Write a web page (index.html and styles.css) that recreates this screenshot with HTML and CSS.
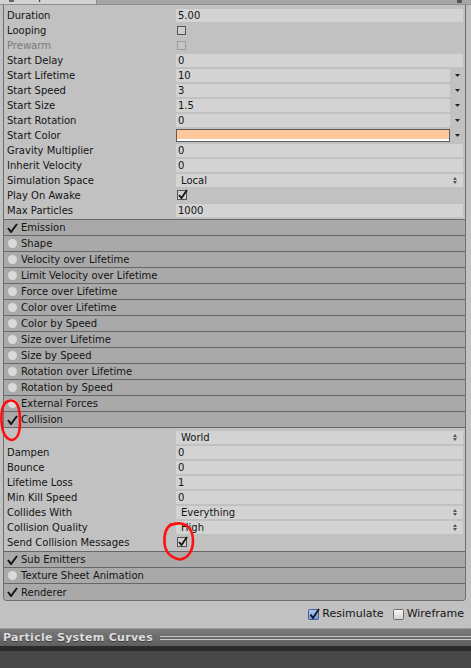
FILE: index.html
```html
<!DOCTYPE html>
<html>
<head>
<meta charset="utf-8">
<link rel="stylesheet" href="styles.css">
</head>
<body>
<div class="tabbar">
  <div class="tab"><span class="tab-icon"></span><span class="tab-label">Inspector</span></div>
  <div class="tab-rest"><span class="menu-icon"></span></div>
</div>

<div class="panel">
  <div class="props">
    <div class="row"><span class="label">Duration</span><div class="field">5.00</div></div>
    <div class="row"><span class="label">Looping</span><div class="cell"><span class="check"></span></div></div>
    <div class="row disabled"><span class="label">Prewarm</span><div class="cell"><span class="check off"></span></div></div>
    <div class="row"><span class="label">Start Delay</span><div class="field">0</div></div>
    <div class="row"><span class="label">Start Lifetime</span><div class="drop"><div class="field">10</div><svg class="arrow" width="5" height="3" viewBox="0 0 5 3"><path d="M0 0H5L2.5 3Z" fill="#222"/></svg></div></div>
    <div class="row"><span class="label">Start Speed</span><div class="drop"><div class="field">3</div><svg class="arrow" width="5" height="3" viewBox="0 0 5 3"><path d="M0 0H5L2.5 3Z" fill="#222"/></svg></div></div>
    <div class="row"><span class="label">Start Size</span><div class="drop"><div class="field">1.5</div><svg class="arrow" width="5" height="3" viewBox="0 0 5 3"><path d="M0 0H5L2.5 3Z" fill="#222"/></svg></div></div>
    <div class="row"><span class="label">Start Rotation</span><div class="drop"><div class="field">0</div><svg class="arrow" width="5" height="3" viewBox="0 0 5 3"><path d="M0 0H5L2.5 3Z" fill="#222"/></svg></div></div>
    <div class="row"><span class="label">Start Color</span><div class="drop"><div class="color"><span class="swatch"></span><span class="alpha"></span></div><svg class="arrow" width="5" height="3" viewBox="0 0 5 3"><path d="M0 0H5L2.5 3Z" fill="#222"/></svg></div></div>
    <div class="row"><span class="label">Gravity Multiplier</span><div class="field">0</div></div>
    <div class="row"><span class="label">Inherit Velocity</span><div class="field">0</div></div>
    <div class="row"><span class="label">Simulation Space</span><div class="field popup"><span>Local</span><svg class="updown" width="4" height="7" viewBox="0 0 4 7"><path d="M0 3H4L2 0Z M0 4H4L2 7Z" fill="#555"/></svg></div></div>
    <div class="row"><span class="label">Play On Awake</span><div class="cell"><svg class="checked" width="12" height="11" viewBox="0 0 12 11"><rect x="0.5" y="1.5" width="9" height="9" fill="#d0d0d0" stroke="#555"/><path d="M2 6L4.5 9L10 1" fill="none" stroke="#111" stroke-width="1.8"/></svg></div></div>
    <div class="row"><span class="label">Max Particles</span><div class="field">1000</div></div>
  </div>

  <div class="mod"><svg class="icon" width="11" height="10" viewBox="0 0 11 10"><path d="M1 5L4 9L10 1" fill="none" stroke="#151515" stroke-width="2"/></svg><span>Emission</span></div>
  <div class="mod"><span class="dot"></span><span>Shape</span></div>
  <div class="mod"><span class="dot"></span><span>Velocity over Lifetime</span></div>
  <div class="mod"><span class="dot"></span><span>Limit Velocity over Lifetime</span></div>
  <div class="mod"><span class="dot"></span><span>Force over Lifetime</span></div>
  <div class="mod"><span class="dot"></span><span>Color over Lifetime</span></div>
  <div class="mod"><span class="dot"></span><span>Color by Speed</span></div>
  <div class="mod"><span class="dot"></span><span>Size over Lifetime</span></div>
  <div class="mod"><span class="dot"></span><span>Size by Speed</span></div>
  <div class="mod"><span class="dot"></span><span>Rotation over Lifetime</span></div>
  <div class="mod"><span class="dot"></span><span>Rotation by Speed</span></div>
  <div class="mod"><span class="dot"></span><span>External Forces</span></div>
  <div class="mod"><svg class="icon" width="11" height="10" viewBox="0 0 11 10"><path d="M1 5L4 9L10 1" fill="none" stroke="#151515" stroke-width="2"/></svg><span>Collision</span></div>

  <div class="mod-body">
    <div class="row"><span class="label"></span><div class="field popup"><span>World</span><svg class="updown" width="4" height="7" viewBox="0 0 4 7"><path d="M0 3H4L2 0Z M0 4H4L2 7Z" fill="#555"/></svg></div></div>
    <div class="row"><span class="label">Dampen</span><div class="field">0</div></div>
    <div class="row"><span class="label">Bounce</span><div class="field">0</div></div>
    <div class="row"><span class="label">Lifetime Loss</span><div class="field">1</div></div>
    <div class="row"><span class="label">Min Kill Speed</span><div class="field">0</div></div>
    <div class="row"><span class="label">Collides With</span><div class="field popup"><span>Everything</span><svg class="updown" width="4" height="7" viewBox="0 0 4 7"><path d="M0 3H4L2 0Z M0 4H4L2 7Z" fill="#555"/></svg></div></div>
    <div class="row"><span class="label">Collision Quality</span><div class="field popup"><span>High</span><svg class="updown" width="4" height="7" viewBox="0 0 4 7"><path d="M0 3H4L2 0Z M0 4H4L2 7Z" fill="#555"/></svg></div></div>
    <div class="row"><span class="label">Send Collision Messages</span><div class="cell"><svg class="checked" width="12" height="11" viewBox="0 0 12 11"><rect x="0.5" y="1.5" width="9" height="9" fill="#d0d0d0" stroke="#555"/><path d="M2 6L4.5 9L10 1" fill="none" stroke="#111" stroke-width="1.8"/></svg></div></div>
  </div>

  <div class="mod"><svg class="icon" width="11" height="10" viewBox="0 0 11 10"><path d="M1 5L4 9L10 1" fill="none" stroke="#151515" stroke-width="2"/></svg><span>Sub Emitters</span></div>
  <div class="mod"><span class="dot"></span><span>Texture Sheet Animation</span></div>
  <div class="mod last"><svg class="icon" width="11" height="10" viewBox="0 0 11 10"><path d="M1 5L4 9L10 1" fill="none" stroke="#151515" stroke-width="2"/></svg><span>Renderer</span></div>
</div>

<div class="footer">
  <label class="toggle"><svg width="12" height="12" viewBox="0 0 12 12"><defs><linearGradient id="blue" x1="0" y1="0" x2="0" y2="1"><stop offset="0" stop-color="#b4cbf0"/><stop offset="1" stop-color="#6f95d6"/></linearGradient></defs><rect x="0.5" y="1.5" width="10" height="10" rx="1" fill="url(#blue)" stroke="#3f5f95"/><path d="M2.5 6.5L5 10L11 1" fill="none" stroke="#111" stroke-width="1.8"/></svg><span>Resimulate</span></label>
  <label class="toggle"><svg width="12" height="12" viewBox="0 0 12 12"><defs><linearGradient id="grey" x1="0" y1="0" x2="0" y2="1"><stop offset="0" stop-color="#fafafa"/><stop offset="1" stop-color="#cfcfcf"/></linearGradient></defs><rect x="0.5" y="1.5" width="10" height="10" rx="1" fill="url(#grey)" stroke="#6a6a6a"/></svg><span>Wireframe</span></label>
</div>

<div class="curves">
  <div class="curves-head"><span class="curves-title">Particle System Curves</span><span class="grip"></span></div>
  <div class="curves-sep"></div>
  <div class="curves-body"></div>
</div>

<svg class="annot" width="471" height="668" viewBox="0 0 471 668">
  <path d="M9 401 C3 402 1 410 1.5 421 C2 431 4 438 11 440 C17 440 20 433 20 423 C20 411 19 402 12 400.5 C10 400.3 8 401 7 402" fill="none" stroke="#ff1010" stroke-width="2.6"/>
  <path d="M172 524 C166 527 164 534 164.5 543 C165 551 170 558 180 559.5 C188 558 193 551 193 541 C193 532 189 525 181 523.5 C177 523 174 523.5 171 525" fill="none" stroke="#ff1010" stroke-width="2.6"/>
</svg>
</body>
</html>
```
FILE: styles.css
```css
* { box-sizing: border-box; }
html, body { margin: 0; padding: 0; }
body {
  width: 471px;
  height: 668px;
  overflow: hidden;
  position: relative;
  background: #c1c1c1;
  font-family: "DejaVu Sans", "Noto Sans", sans-serif;
  font-size: 10px;
  color: #141414;
}

/* top tab strip */
.tabbar {
  display: flex;
  height: 5px;
  overflow: hidden;
  border-bottom: 1px solid #8e8e8e;
}
.tab {
  width: 97px;
  background: #d3d3d3;
  display: flex;
  align-items: flex-start;
  padding-left: 9px;
  overflow: hidden;
  border-right: 1px solid #8e8e8e;
}
.tab-icon {
  width: 5px;
  height: 8px;
  margin-top: -6px;
  background: #666;
  margin-right: 8px;
}
.tab-label {
  display: block;
  font-size: 11px;
  line-height: 12px;
  margin-top: -9px;
  color: #222;
}
.tab-rest {
  flex: 1;
  background: #a6a6a6;
  display: flex;
  justify-content: flex-end;
  padding-right: 9px;
}
.menu-icon {
  width: 5px;
  height: 3px;
  background: #555;
}

/* main panel */
.panel {
  margin-left: 3px;
  width: 463px;
  border: 1px solid #6e6e6e;
  border-top: none;
  border-radius: 0 0 4px 4px;
  overflow: hidden;
}
.props {
  padding: 3px 0 1px;
  border-bottom: 1px solid #6a6a6a;
}
.row {
  display: grid;
  grid-template-columns: 169px 1fr;
  align-items: center;
  height: 15px;
  padding: 0 2px 0 3px;
}
.label { white-space: nowrap; }
.disabled .label { color: #7a7a7a; }

.field {
  height: 13px;
  line-height: 13px;
  background: #d3d3d3;
  padding-left: 2px;
  white-space: nowrap;
}
.popup {
  display: flex;
  justify-content: space-between;
  align-items: center;
  padding: 0 6px 0 5px;
}
.drop {
  display: grid;
  grid-template-columns: 1fr 13px;
  align-items: center;
}
.arrow { justify-self: center; margin-left: 1px; }
.cell { display: flex; align-items: center; height: 13px; }
.check {
  width: 9px;
  height: 9px;
  margin-left: 1px;
  border: 1px solid #555;
  background: #cecece;
}
.check.off {
  border-color: #9b9b9b;
  background: #c6c6c6;
}
.checked { margin-left: 1px; margin-top: -2px; }

.color {
  height: 13px;
  border: 1px solid #5c5c5c;
  display: flex;
  flex-direction: column;
}
.swatch { flex: 1; background: #ffc89c; }
.alpha { height: 2px; background: #ffffff; }

/* module headers */
.mod {
  height: 16px;
  display: flex;
  align-items: center;
  padding-left: 3px;
  background: #a9a9a9;
  border-bottom: 1px solid #676767;
  white-space: nowrap;
}
.mod.last { border-bottom: none; }
.mod .icon {
  margin-right: 3px;
  flex: none;
}
.dot {
  width: 9px;
  height: 9px;
  border-radius: 50%;
  background: #dadada;
  margin: 0 4px 0 1px;
  flex: none;
}
.mod-body {
  padding: 2px 0 1px;
  background: #c1c1c1;
  border-bottom: 1px solid #676767;
}

/* footer toggles */
.footer {
  height: 27px;
  display: flex;
  justify-content: flex-end;
  align-items: flex-start;
  padding: 6px 7px 0 0;
  font-size: 11px;
}
.toggle {
  display: flex;
  align-items: center;
  gap: 2px;
  color: #151515;
}
.toggle + .toggle { margin-left: 9px; }

/* curves window */
.curves {
  height: 41px;
  display: flex;
  flex-direction: column;
}
.curves-head {
  height: 18px;
  border-top: 1px solid #9c9c9c;
  background: linear-gradient(#7a7a7a, #5e5e5e);
  display: flex;
  align-items: center;
  padding-left: 3px;
}
.curves-title {
  font-weight: bold;
  font-size: 11px;
  letter-spacing: 0.3px;
  color: #dedede;
  text-shadow: 0 1px 0 #3a3a3a;
  white-space: nowrap;
}
.grip {
  flex: 1;
  height: 4px;
  margin-left: 7px;
  border-top: 1px solid #c6c6c6;
  border-bottom: 1px solid #c6c6c6;
}
.curves-sep { height: 5px; background: #2b2b2b; }
.curves-body { flex: 1; background: #484848; }

/* red hand-drawn annotations */
.annot {
  position: absolute;
  left: 0;
  top: 0;
  pointer-events: none;
}
```
